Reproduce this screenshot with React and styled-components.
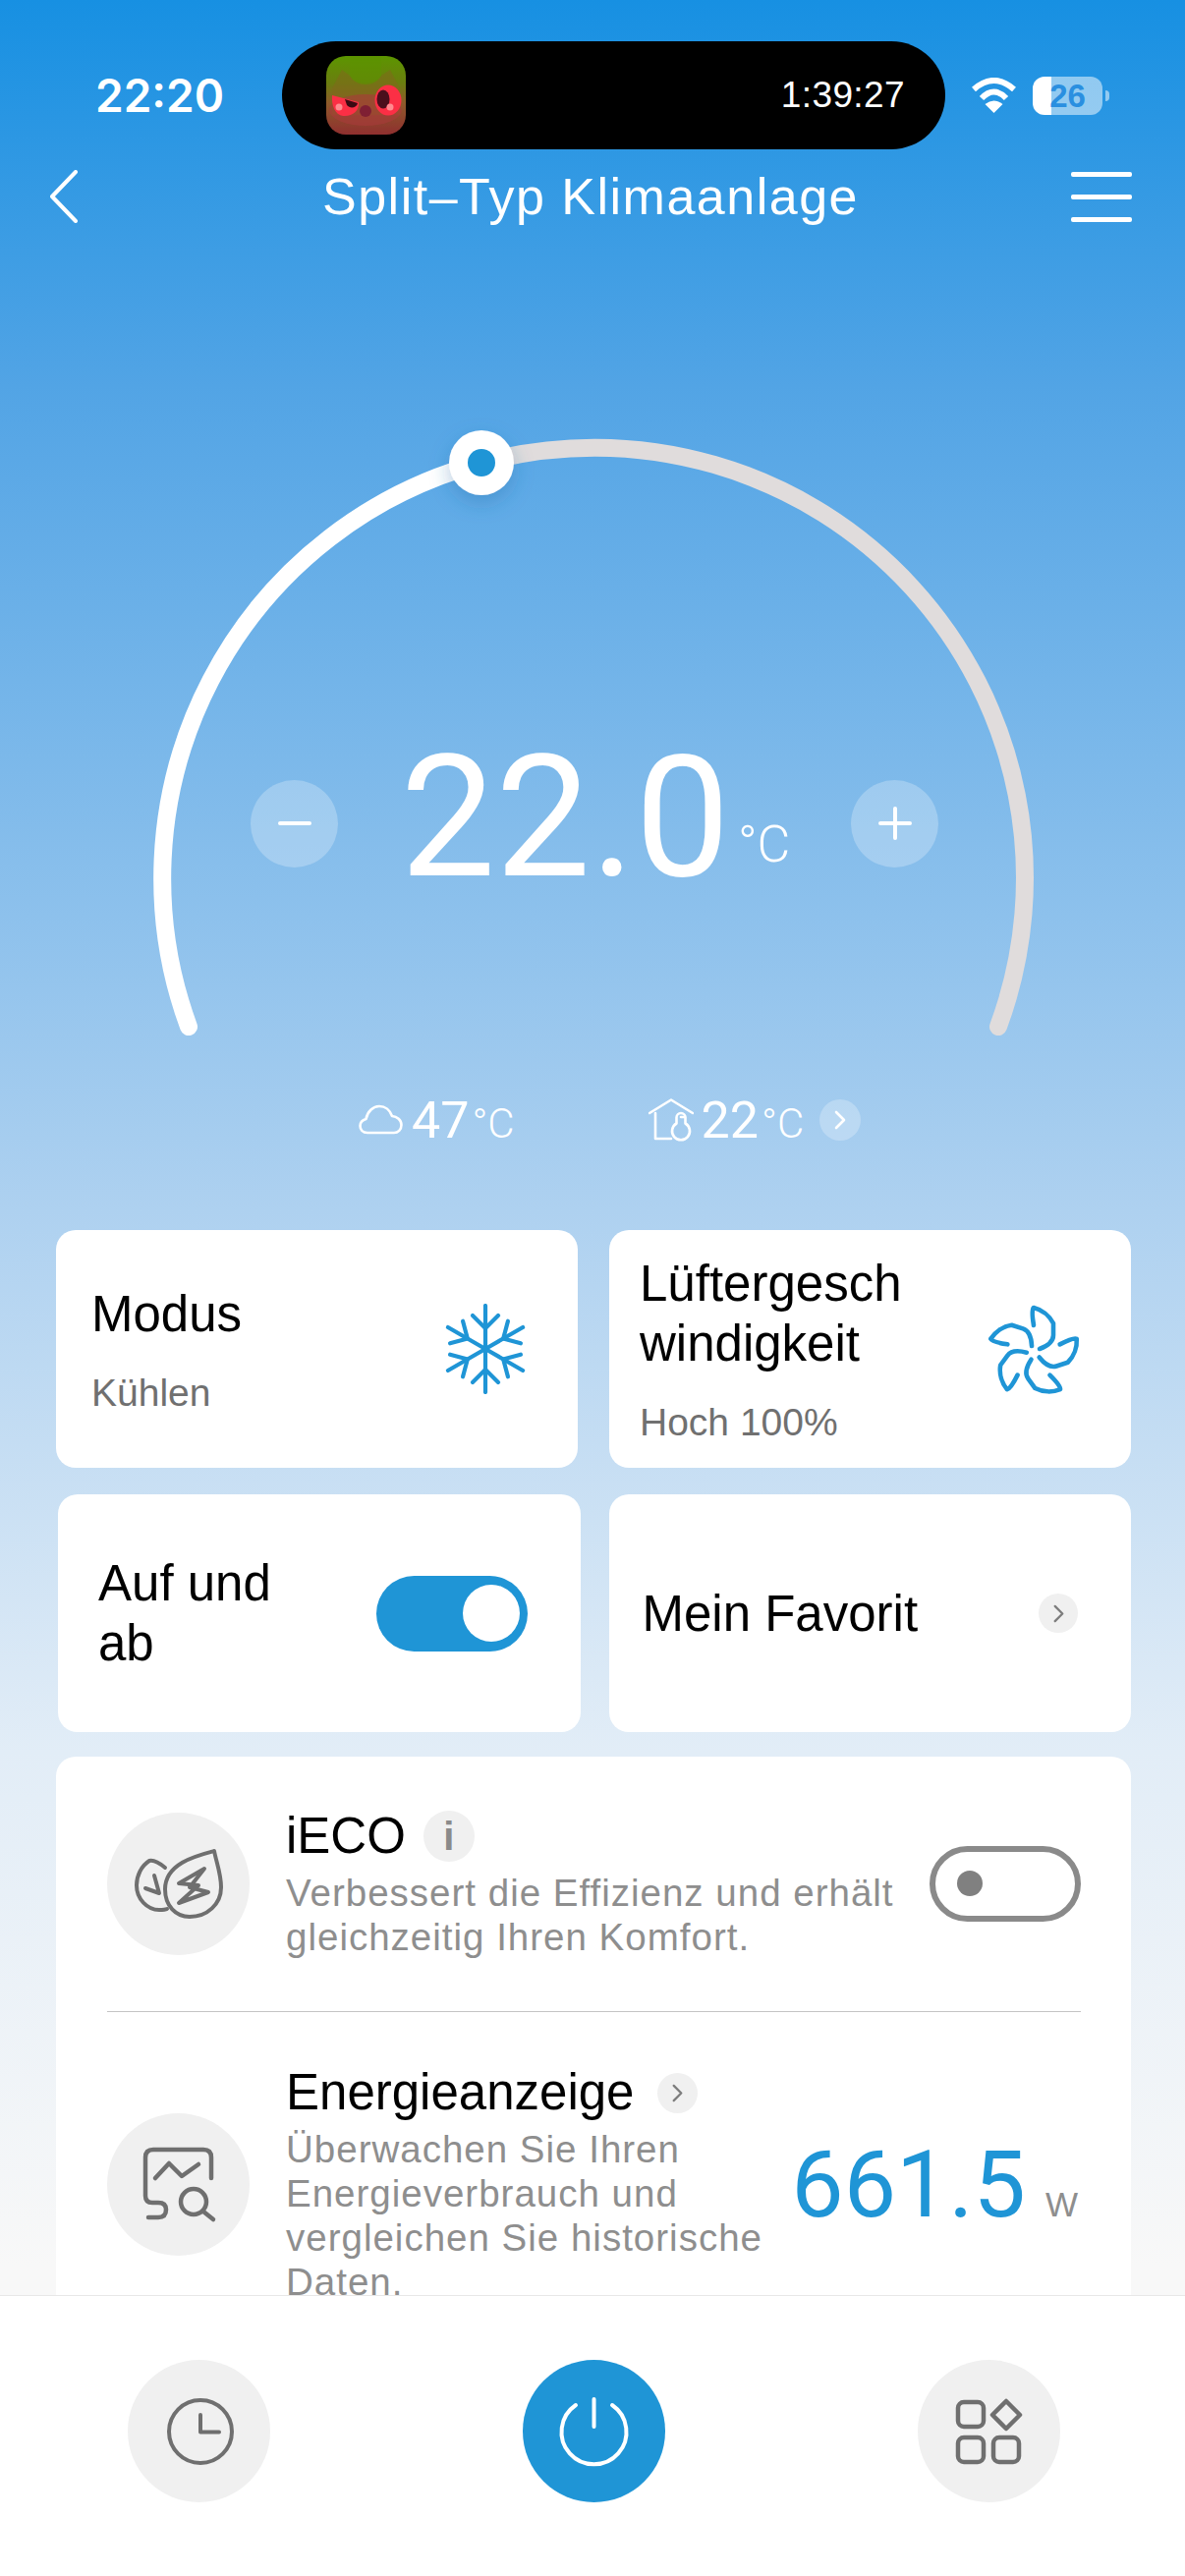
import React from 'react';
import styled, { createGlobalStyle } from 'styled-components';

const GlobalStyle = createGlobalStyle`
  html, body {
    margin: 0;
    padding: 0;
    background: #fff;
    font-family: "Liberation Sans", Arial, sans-serif;
  }
`;

const BLUE = '#1f95d6';
const ICON_GREY = '#6f6f6f';

const Page = styled.div`
  position: relative;
  width: 1206px;
  height: 2622px;
  overflow: hidden;
  display: flex;
  flex-direction: column;
  background: linear-gradient(180deg, #1790e2 0%, #52a4e5 15%, #aed1f0 47%, #e2edf7 68%, #f8f8f8 88%);
`;

/* status bar */
const StatusBar = styled.div`
  display: flex;
  align-items: center;
  height: 110px;
  margin-top: 42px;
  padding-left: 97px;
  color: #fff;
`;

const Clock = styled.div`
  width: 190px;
  font-family: Inter, sans-serif;
  font-size: 46px;
  font-weight: 600;
`;

const Island = styled.div`
  width: 675px;
  height: 110px;
  border-radius: 55px;
  background: #000;
  display: flex;
  align-items: center;
  justify-content: space-between;
  padding: 0 41px 0 45px;
  box-sizing: border-box;
`;

const Timer = styled.div`
  font-size: 37px;
  letter-spacing: 0.4px;
`;

const SystemIcons = styled.div`
  display: flex;
  align-items: center;
  margin-left: 26px;
  gap: 16px;
`;

const Battery = styled.div`
  position: relative;
  width: 71px;
  height: 39px;
  border-radius: 12px;
  background: linear-gradient(90deg, #fff ${p => p.$level}%, rgba(255, 255, 255, 0.5) ${p => p.$level}%);
  color: #2a8fe0;
  font-size: 33px;
  font-weight: 700;
  line-height: 39px;
  text-align: center;
  &::after {
    content: '';
    position: absolute;
    left: 74px;
    top: 14px;
    width: 4px;
    height: 11px;
    border-radius: 0 5px 5px 0;
    background: rgba(255, 255, 255, 0.5);
  }
`;

/* nav */
const NavBar = styled.div`
  display: grid;
  grid-template-columns: 1fr auto 1fr;
  align-items: center;
  height: 96px;
  padding: 0 54px 0 50px;
`;

const Title = styled.div`
  color: #fff;
  font-size: 52px;
  letter-spacing: 1.5px;
  white-space: nowrap;
`;

const MenuButton = styled.div`
  justify-self: end;
  display: flex;
  flex-direction: column;
  gap: 18px;
  width: 62px;
  span {
    display: block;
    height: 5px;
    border-radius: 2px;
    background: #fff;
  }
`;

/* gauge */
const Gauge = styled.div`
  position: relative;
  height: 842px;
`;

const GaugeArc = styled.svg`
  display: block;
  width: 1206px;
  height: 842px;
`;

const TempRow = styled.div`
  position: absolute;
  left: 255px;
  right: 251px;
  top: 500px;
  height: 180px;
  display: flex;
  align-items: center;
  justify-content: space-between;
`;

const RoundButton = styled.div`
  width: 89px;
  height: 89px;
  border-radius: 50%;
  background: rgba(255, 255, 255, 0.25);
  display: flex;
  align-items: center;
  justify-content: center;
`;

const TempValue = styled.div`
  font-family: Roboto, sans-serif;
  font-weight: 400;
  font-size: 172px;
  line-height: 180px;
  color: #fff;
  white-space: nowrap;
  margin: 16px 0 0 2px;
`;

const TempUnit = styled.span`
  font-size: 52px;
  font-weight: 300;
  margin-left: 8px;
  vertical-align: 14px;
`;

const AmbientRow = styled.div`
  display: flex;
  align-items: center;
  height: 100px;
  padding-left: 365px;
  gap: 136px;
`;

const Ambient = styled.div`
  display: flex;
  align-items: center;
  gap: 8px;
  color: #fff;
  font-family: Roboto, sans-serif;
  font-weight: 400;
  font-size: 52px;
`;

const AmbientUnit = styled.span`
  font-size: 42px;
  font-weight: 300;
  margin-left: 3px;
  vertical-align: 0;
`;

const Badge = styled.div`
  width: ${p => p.$size}px;
  height: ${p => p.$size}px;
  margin-left: ${p => p.$left || 0}px;
  border-radius: 50%;
  flex: none;
  background: ${p => p.$bg || '#f0f0f0'};
  color: #7d7d7d;
  display: flex;
  align-items: center;
  justify-content: center;
`;

/* cards */
const CardRow = styled.div`
  display: grid;
  grid-template-columns: 1fr 1fr;
  gap: ${p => p.$gap}px;
  height: 242px;
  padding: 0 ${p => p.$right}px 0 ${p => p.$left}px;
  margin-top: ${p => p.$top}px;
`;

const Card = styled.div`
  background: #fff;
  border-radius: 20px;
  display: flex;
  align-items: center;
  justify-content: space-between;
  padding: 0 ${p => p.$right}px 0 ${p => p.$left}px;
`;

const CardLabel = styled.div`
  font-size: 51px;
  line-height: 61px;
  color: #000;
  width: ${p => p.$width || 'auto'};
  word-break: ${p => (p.$breakAll ? 'break-all' : 'normal')};
`;

const CardSub = styled.div`
  font-size: 39px;
  color: #707070;
  margin-top: ${p => p.$top}px;
`;

const Toggle = styled.div`
  width: 154px;
  height: 77px;
  border-radius: 39px;
  box-sizing: border-box;
  display: flex;
  align-items: center;
  flex: none;
  ${p => p.$on
    ? `background: ${BLUE}; justify-content: flex-end; padding-right: 8px;`
    : `background: #fff; border: 6px solid #8a8a8a; padding-left: 22px; margin-left: auto;`}
`;

const ToggleKnob = styled.div`
  width: ${p => p.$size}px;
  height: ${p => p.$size}px;
  border-radius: 50%;
  background: ${p => p.$color};
`;

/* panel */
const Panel = styled.div`
  margin: 25px 55px 0 57px;
  padding: 0 51px 0 52px;
  background: #fff;
  border-radius: 20px;
  height: 800px;
`;

const PanelRow = styled.div`
  display: flex;
  align-items: center;
  padding: ${p => p.$top}px 0 ${p => p.$bottom}px;
  border-bottom: ${p => (p.$line ? '1px solid #c4c4c4' : 'none')};
`;

const FeatureIcon = styled.div`
  width: 145px;
  height: 145px;
  border-radius: 50%;
  background: #f0f0f0;
  flex: none;
  margin-right: 37px;
`;

const FeatureText = styled.div`
  width: ${p => p.$width}px;
  flex: none;
`;

const FeatureTitle = styled.div`
  display: flex;
  align-items: center;
  font-size: 51px;
  line-height: 58px;
  color: #000;
  margin-bottom: 6px;
`;

const FeatureDesc = styled.div`
  font-size: 38.5px;
  line-height: 45px;
  letter-spacing: 1px;
  color: #8e8e8e;
`;

const InfoMark = styled.span`
  font-size: 40px;
  font-weight: 700;
  color: #8a8a8a;
`;

const PowerValue = styled.div`
  margin-left: auto;
  display: flex;
  align-items: baseline;
  gap: 20px;
  white-space: nowrap;
  color: ${BLUE};
  font-family: Roboto, sans-serif;
  font-weight: 400;
  font-size: 95px;
`;

const PowerUnit = styled.span`
  font-family: "Liberation Sans", sans-serif;
  font-size: 35px;
  color: #8e8e8e;
  margin-right: 3px;
`;

/* bottom bar */
const BottomBar = styled.div`
  position: absolute;
  left: 0;
  right: 0;
  bottom: 0;
  height: 286px;
  box-sizing: border-box;
  padding: 65px 127px 0 130px;
  background: #fff;
  border-top: 1px solid #e8e8e8;
  display: flex;
  justify-content: space-between;
  align-items: flex-start;
`;

const BottomButton = styled.div`
  width: 145px;
  height: 145px;
  border-radius: 50%;
  background: ${p => (p.$active ? BLUE : '#f0f0f0')};
`;

const Drawing = styled.svg`
  display: block;
  flex: none;
`;

const FanDrawing = styled(Drawing)`
  margin-top: 8px;
`;

function Chevron({ color = 'currentColor', size = 20, width = 3 }) {
  return (
    <Drawing width={size} height={size} viewBox="0 0 20 20" fill="none">
      <path d="M6 2 L14 10 L6 18" stroke={color} strokeWidth={width} strokeLinecap="round" strokeLinejoin="round" />
    </Drawing>
  );
}

function OwlIcon() {
  return (
    <Drawing width="81" height="80" viewBox="0 0 81 80">
      <defs>
        <linearGradient id="owl" x1="0" y1="0" x2="0" y2="1">
          <stop offset="0" stopColor="#5c9600" />
          <stop offset="0.35" stopColor="#6b7d10" />
          <stop offset="0.6" stopColor="#8d5a2a" />
          <stop offset="1" stopColor="#8f2f2f" />
        </linearGradient>
      </defs>
      <rect width="81" height="80" rx="20" fill="url(#owl)" />
      <path d="M6 33 L16 14 L24 20 C30 30 50 30 56 20 L65 14 L75 33 L75 60 L6 60 Z" fill="#7f6a1c" opacity="0.55" />
      <path d="M24 20 C30 32 50 32 56 20 L56 0 L24 0 Z" fill="#5c9200" opacity="0.6" />
      <ellipse cx="40" cy="55" rx="37" ry="16" fill="#a83a3a" opacity="0.6" />
      <path d="M6 40 L33 47 C34 56 26 62 17 61 C9 60 5 50 6 40 Z" fill="#fb2f45" />
      <path d="M19 44 L32 48 C31 53 24 54 21 50 Z" fill="#3a0a12" />
      <ellipse cx="63" cy="45" rx="13.5" ry="15.5" fill="#fb2f45" />
      <ellipse cx="58" cy="44" rx="6.5" ry="9.5" fill="#4b0f1c" />
      <circle cx="13" cy="52" r="3.5" fill="#ff8a8f" />
      <circle cx="65" cy="52" r="3.5" fill="#ff8a8f" />
      <circle cx="40" cy="56" r="6" fill="#7f1f33" />
    </Drawing>
  );
}

function WifiIcon() {
  return (
    <Drawing width="47" height="36" viewBox="0 0 47 36" fill="none">
      <path d="M3 12 Q23.5 -6 44 12" stroke="#fff" strokeWidth="6" />
      <path d="M11 21 Q23.5 8 36 21" stroke="#fff" strokeWidth="6" />
      <path d="M23.5 36 L14.5 27 Q23.5 20 32.5 27 Z" fill="#fff" />
    </Drawing>
  );
}

function BackIcon() {
  return (
    <Drawing width="30" height="54" viewBox="0 0 30 54" fill="none">
      <path d="M27 2 L3 27 L27 52" stroke="#fff" strokeWidth="4" strokeLinecap="round" strokeLinejoin="round" />
    </Drawing>
  );
}

function CloudIcon() {
  return (
    <Drawing width="46" height="32" viewBox="0 0 46 32" fill="none">
      <path
        d="M9 29 C4 29 1.5 25.5 1.5 22 C1.5 18.5 4 16 7.5 15 C9 7 15 2 21 2 C27 2 32 6 34 12 C39 12.5 43.5 16 43.5 21 C43.5 26 40 29 36 29 Z"
        stroke="#fff"
        strokeWidth="2.6"
        strokeLinejoin="round"
      />
    </Drawing>
  );
}

function HouseIcon() {
  return (
    <Drawing width="46" height="44" viewBox="0 0 46 44" fill="none" stroke="#fff" strokeWidth="2.6" strokeLinecap="round" strokeLinejoin="round">
      <path d="M1 15 L23 1.5 L45 15" />
      <path d="M7 15 V41 H23" />
      <path d="M28.5 25.5 V19.5 A4.5 4.5 0 0 1 37.5 19.5 V25.5 A9 9 0 1 1 28.5 25.5 Z" />
      <path d="M33 19 H37" />
    </Drawing>
  );
}

function SnowflakeIcon() {
  const arms = [0, 60, 120, 180, 240, 300];
  return (
    <Drawing width="88" height="92" viewBox="-44 -46 88 92" fill="none" stroke={BLUE} strokeWidth="4.2" strokeLinecap="round" strokeLinejoin="round">
      {arms.map(a => (
        <g key={a} transform={`rotate(${a})`}>
          <path d="M0 0 V-44" />
          <path d="M-13 -34 L0 -21 L13 -34" />
        </g>
      ))}
    </Drawing>
  );
}

function FanIcon() {
  const blades = [0, 72, 144, 216, 288];
  return (
    <FanDrawing width="98" height="98" viewBox="-49 -49 98 98" fill="none" stroke={BLUE} strokeWidth="4.6" strokeLinecap="round" strokeLinejoin="round">
      {blades.map(a => (
        <path key={a} transform={`rotate(${a})`} d="M6 -4 C14 -7 20 -11 20 -18 L20 -30 C16 -38 8 -44 0 -46 C-2 -44 -1 -34 0 -28" />
      ))}
    </FanDrawing>
  );
}

function LeafIcon() {
  return (
    <Drawing width="145" height="145" viewBox="0 0 145 145" fill="none" stroke={ICON_GREY} strokeWidth="4" strokeLinecap="round" strokeLinejoin="round">
      <path d="M109 39 C90 44 59 52 59 78 C59 95 70 106 84 106 C102 106 116 93 116 76 C116 62 111 50 109 39 Z" />
      <path d="M99 57 L73 72 L93 74 L73 92 L103 81 L84 76 Z" />
      <path d="M59 56 C53 51 47 48 43 49 C35 54 30 64 30 74 C30 88 41 99 53 99 C56 99 59 99 61 98" />
      <path d="M48 64 L53 82 L39 77" />
    </Drawing>
  );
}

function EnergyIcon() {
  return (
    <Drawing width="145" height="145" viewBox="0 0 145 145" fill="none" stroke={ICON_GREY} strokeWidth="4.5" strokeLinecap="round" strokeLinejoin="round">
      <path d="M106 66 V45 Q106 37 98 37 H47 Q39 37 39 45 V84 Q39 91 46 91 H52 Q60 91 60 98 Q60 106 52 106 H42" />
      <path d="M49 66 L63 51 L76 64 L93 52" />
      <circle cx="88" cy="90" r="13" />
      <path d="M98 100 L108 108" />
    </Drawing>
  );
}

function ClockIcon() {
  return (
    <Drawing width="145" height="145" viewBox="0 0 145 145" fill="none" stroke={ICON_GREY} strokeWidth="4" strokeLinecap="round" strokeLinejoin="round">
      <circle cx="74" cy="73" r="32" />
      <path d="M74 56 V73.5 H93" />
    </Drawing>
  );
}

function PowerIcon() {
  return (
    <Drawing width="145" height="145" viewBox="0 0 145 145" fill="none" stroke="#fff" strokeWidth="4" strokeLinecap="round">
      <path d="M54 46 A33 33 0 1 0 91 46" />
      <path d="M72.5 40 V68" />
    </Drawing>
  );
}

function AppsIcon() {
  return (
    <Drawing width="145" height="145" viewBox="0 0 145 145" fill="none" stroke={ICON_GREY} strokeWidth="4.5" strokeLinejoin="round">
      <rect x="41" y="43" width="26" height="25" rx="6" />
      <rect x="41" y="79" width="26" height="25" rx="6" />
      <rect x="77" y="79" width="26" height="25" rx="6" />
      <path d="M90 42 L104 56 L90 70 L76 56 Z" />
    </Drawing>
  );
}

export default function App() {
  return (
    <Page>
      <GlobalStyle />

      <StatusBar>
        <Clock>22:20</Clock>
        <Island>
          <OwlIcon />
          <Timer>1:39:27</Timer>
        </Island>
        <SystemIcons>
          <WifiIcon />
          <Battery $level={27}>26</Battery>
        </SystemIcons>
      </StatusBar>

      <NavBar>
        <BackIcon />
        <Title>Split–Typ Klimaanlage</Title>
        <MenuButton>
          <span />
          <span />
          <span />
        </MenuButton>
      </NavBar>

      <Gauge>
        <GaugeArc viewBox="0 0 1206 842" fill="none">
          <defs>
            <filter id="knobShadow" x="-50%" y="-50%" width="200%" height="200%">
              <feDropShadow dx="0" dy="8" stdDeviation="10" floodColor="#2a6fa8" floodOpacity="0.35" />
            </filter>
          </defs>
          <path d="M490 223 A438 438 0 0 1 1016 797" stroke="#e0dcdc" strokeWidth="18" strokeLinecap="round" />
          <path d="M192 797 A438 438 0 0 1 490 223" stroke="#fff" strokeWidth="18" strokeLinecap="round" />
          <circle cx="490" cy="223" r="33" fill="#fff" filter="url(#knobShadow)" />
          <circle cx="490" cy="223" r="14" fill={BLUE} />
        </GaugeArc>
        <TempRow>
          <RoundButton>
            <Drawing width="34" height="6" viewBox="0 0 34 6">
              <rect width="34" height="4" y="1" rx="2" fill="#fff" />
            </Drawing>
          </RoundButton>
          <TempValue>22.0<TempUnit>°C</TempUnit></TempValue>
          <RoundButton>
            <Drawing width="34" height="34" viewBox="0 0 34 34">
              <rect width="34" height="4" y="15" rx="2" fill="#fff" />
              <rect width="4" height="34" x="15" rx="2" fill="#fff" />
            </Drawing>
          </RoundButton>
        </TempRow>
      </Gauge>

      <AmbientRow>
        <Ambient>
          <CloudIcon />
          <span>47<AmbientUnit>°C</AmbientUnit></span>
        </Ambient>
        <Ambient>
          <HouseIcon />
          <span>22<AmbientUnit>°C</AmbientUnit></span>
          <Badge $size={42} $left={8} $bg="rgba(255,255,255,0.25)">
            <Chevron color="#fff" size={20} width={2.6} />
          </Badge>
        </Ambient>
      </AmbientRow>

      <CardRow $gap={32} $left={57} $right={55} $top={62}>
        <Card $left={36} $right={50}>
          <div>
            <CardLabel>Modus</CardLabel>
            <CardSub $top={28}>Kühlen</CardSub>
          </div>
          <SnowflakeIcon />
        </Card>
        <Card $left={31} $right={50}>
          <div>
            <CardLabel $width="285px" $breakAll>Lüftergeschwindigkeit</CardLabel>
            <CardSub $top={28}>Hoch 100%</CardSub>
          </div>
          <FanIcon />
        </Card>
      </CardRow>

      <CardRow $gap={29} $left={59} $right={55} $top={27}>
        <Card $left={41} $right={54}>
          <CardLabel $width="200px">Auf und ab</CardLabel>
          <Toggle $on>
            <ToggleKnob $size={58} $color="#fff" />
          </Toggle>
        </Card>
        <Card $left={34} $right={54}>
          <CardLabel>Mein Favorit</CardLabel>
          <Badge $size={40}>
            <Chevron size={19} width={2.4} />
          </Badge>
        </Card>
      </CardRow>

      <Panel>
        <PanelRow $top={52} $bottom={53} $line>
          <FeatureIcon>
            <LeafIcon />
          </FeatureIcon>
          <FeatureText $width={640}>
            <FeatureTitle>
              iECO
              <Badge $size={52} $left={18}><InfoMark>i</InfoMark></Badge>
            </FeatureTitle>
            <FeatureDesc>Verbessert die Effizienz und erhält gleichzeitig Ihren Komfort.</FeatureDesc>
          </FeatureText>
          <Toggle>
            <ToggleKnob $size={26} $color="#808080" />
          </Toggle>
        </PanelRow>
        <PanelRow $top={53} $bottom={0}>
          <FeatureIcon>
            <EnergyIcon />
          </FeatureIcon>
          <FeatureText $width={500}>
            <FeatureTitle>
              Energieanzeige
              <Badge $size={41} $left={24}>
                <Chevron size={19} width={2.4} />
              </Badge>
            </FeatureTitle>
            <FeatureDesc>Überwachen Sie Ihren Energieverbrauch und vergleichen Sie historische Daten.</FeatureDesc>
          </FeatureText>
          <PowerValue>661.5<PowerUnit>W</PowerUnit></PowerValue>
        </PanelRow>
      </Panel>

      <BottomBar>
        <BottomButton><ClockIcon /></BottomButton>
        <BottomButton $active><PowerIcon /></BottomButton>
        <BottomButton><AppsIcon /></BottomButton>
      </BottomBar>
    </Page>
  );
}
